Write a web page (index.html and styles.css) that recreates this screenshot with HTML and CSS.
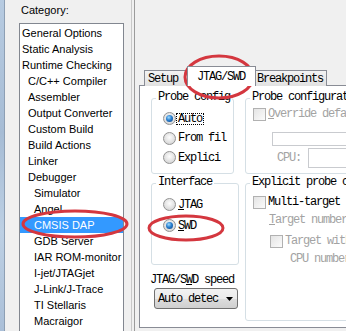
FILE: index.html
```html
<!DOCTYPE html>
<html lang="en">
<head>
    <meta charset="UTF-8">
    <title>Options - Debugger</title>
    <link rel="stylesheet" href="styles.css">
</head>
<body>
    <div class="dialog">
        <div class="edge"></div>

        <div class="category">
            <div class="category-label">Category:</div>
            <ul class="tree">
                <li>General Options</li>
                <li>Static Analysis</li>
                <li>Runtime Checking</li>
                <li class="lv2">C/C++ Compiler</li>
                <li class="lv2">Assembler</li>
                <li class="lv2">Output Converter</li>
                <li class="lv2">Custom Build</li>
                <li class="lv2">Build Actions</li>
                <li class="lv2">Linker</li>
                <li class="lv2">Debugger</li>
                <li class="lv3">Simulator</li>
                <li class="lv3">Angel</li>
                <li class="lv3 selected">CMSIS DAP</li>
                <li class="lv3">GDB Server</li>
                <li class="lv3">IAR ROM-monitor</li>
                <li class="lv3">I-jet/JTAGjet</li>
                <li class="lv3">J-Link/J-Trace</li>
                <li class="lv3">TI Stellaris</li>
                <li class="lv3">Macraigor</li>
            </ul>
        </div>

        <div class="splitter"></div>

        <div class="options">
            <div class="tabs">
                <div class="tab tab-setup">Setup</div>
                <div class="tab tab-active">JTAG/SWD</div>
                <div class="tab tab-bp">Breakpoints</div>
            </div>
            <div class="panel">
                <div class="col-left">
                    <div class="group group-probe">
                        <div class="legend">Probe config</div>
                        <div class="opts probe-opts">
                            <div class="opt"><span class="radio on"></span><span class="lbl focus">Auto</span></div>
                            <div class="opt"><span class="radio"></span><span class="lbl">From fil</span></div>
                            <div class="opt"><span class="radio"></span><span class="lbl">Explici</span></div>
                        </div>
                    </div>
                    <div class="group group-iface">
                        <div class="legend">Interface</div>
                        <div class="opts iface-opts">
                            <div class="opt"><span class="radio"></span><span class="lbl"><u>J</u>TAG</span></div>
                            <div class="opt"><span class="radio on"></span><span class="lbl"><u>S</u>WD</span></div>
                        </div>
                    </div>
                    <div class="speed">JTAG/S<u>W</u>D speed</div>
                    <div class="select">
                        <span>Auto detec</span>
                        <svg width="7" height="4" viewBox="0 0 7 4"><path d="M0 0H7L3.5 4Z" fill="#000"/></svg>
                    </div>
                </div>

                <div class="col-right">
                    <div class="group group-pcfg">
                        <div class="legend">Probe configuration</div>
                        <div class="check-row first-row"><span class="check"></span><span class="dim"><u>O</u>verride default</span></div>
                        <div class="box box-file"></div>
                        <div class="cpu-row"><span class="dim">CPU:</span><span class="box box-cpu"></span></div>
                    </div>
                    <div class="group group-explicit">
                        <div class="legend">Explicit probe configuration</div>
                        <div class="check-row multi-row"><span class="check"></span><span>Multi-target debugging</span></div>
                        <div class="check-row target-row"><span class="dim"><u>T</u>arget number</span></div>
                        <div class="check-row with-row"><span class="check"></span><span class="dim">Target with multiple CPUs</span></div>
                        <div class="check-row cpunum-row"><span class="dim">CPU number</span></div>
                    </div>
                </div>
            </div>
        </div>

        <svg class="marks" width="346" height="331" viewBox="0 0 346 331">
            <ellipse cx="219" cy="77" rx="34" ry="21"/>
            <ellipse cx="75" cy="224" rx="52" ry="13"/>
            <ellipse cx="186" cy="228" rx="37" ry="12"/>
        </svg>
    </div>
</body>
</html>
```

FILE: styles.css
```css
body {
    margin: 0;
    background: #f0f0f0;
    font-family: "Liberation Sans", Arial, sans-serif;
    font-size: 11px;
    color: #000;
}
.dialog {
    position: relative;
    display: flex;
    align-items: flex-start;
    width: 346px;
    height: 331px;
    overflow: hidden;
}
.edge {
    flex: none;
    width: 4px;
    height: 331px;
    background: linear-gradient(#b7cbe1, #a6bcd5 40%, #bdd0e4 70%, #aabfd8);
    border-right: 1px solid #8d9fb4;
}

/* category tree */
.category {
    flex: none;
    width: 125px;
    padding-left: 14px;
    box-sizing: border-box;
}
.category-label {
    margin: 3px 0 0 2px;
    line-height: 14px;
}
.tree {
    list-style: none;
    margin: 6px 0 0;
    padding: 1px 0 0;
    width: 105px;
    height: 320px;
    box-sizing: border-box;
    background: #fff;
    border: 1px solid #828790;
}
.tree li {
    height: 16px;
    line-height: 16px;
    padding-left: 2px;
    white-space: nowrap;
}
.tree .lv2 {
    padding-left: 8px;
}
.tree .lv3 {
    padding-left: 14px;
}
.tree .selected {
    background: #3399ff;
    color: #fff;
}
.splitter {
    flex: none;
    width: 2px;
    height: 331px;
    margin-left: 1px;
    border-left: 1px solid #c8c8c8;
    border-right: 1px solid #9b9b9b;
}

/* options pane */
.options {
    flex: none;
    width: 260px;
    padding: 66px 0 0 4px;
    font-family: "Liberation Mono", monospace;
    font-size: 12px;
    letter-spacing: -1.2px;
}
.tabs {
    display: flex;
    align-items: flex-end;
    height: 20px;
    padding-left: 5px;
}
.tab {
    flex: none;
    box-sizing: border-box;
    height: 16px;
    padding-top: 2px;
    line-height: 12px;
    border: 1px solid #898c95;
    border-bottom: none;
    background: linear-gradient(#f3f3f3, #e1e1e1);
    white-space: nowrap;
}
.tab-setup {
    width: 45px;
    padding-left: 3px;
}
.tab-active {
    position: relative;
    z-index: 1;
    width: 69px;
    height: 20px;
    padding-top: 4px;
    padding-left: 9px;
    margin: 0 -2px;
    background: #fff;
}
.tab-bp {
    width: 73px;
    padding-left: 2px;
}
.panel {
    display: flex;
    align-items: flex-start;
    margin-top: -1px;
    width: 256px;
    height: 243px;
    box-sizing: border-box;
    padding: 12px 0 0 11px;
    border: 1px solid #898c95;
    background: #fff;
}
.col-left {
    flex: none;
    width: 88px;
}
.col-right {
    flex: none;
    width: 160px;
    margin-left: 6px;
}
.group {
    box-sizing: border-box;
    border: 1px solid #d5dfe5;
    border-radius: 3px;
}
.legend {
    width: max-content;
    margin: -8px 0 0 4px;
    padding: 0 2px;
    line-height: 12px;
    background: #fff;
    white-space: nowrap;
}
.group-probe {
    width: 83px;
    height: 76px;
}
.group-iface {
    width: 88px;
    height: 82px;
    margin-top: 9px;
}
.probe-opts {
    padding-top: 6px;
}
.probe-opts .opt {
    height: 19.5px;
}
.iface-opts {
    padding-top: 6px;
}
.iface-opts .opt {
    height: 21px;
}
.opt {
    display: flex;
    align-items: center;
    margin-left: 11px;
}
.radio {
    flex: none;
    display: flex;
    align-items: center;
    justify-content: center;
    width: 13px;
    height: 13px;
    box-sizing: border-box;
    border: 1px solid #929292;
    border-radius: 50%;
    background: radial-gradient(circle at 50% 40%, #fdfdfd 0, #e2e2e2 55%, #c9c9c9 100%);
}
.radio.on::after {
    content: "";
    width: 7px;
    height: 7px;
    border-radius: 50%;
    background: radial-gradient(circle at 40% 35%, #9fdcff 0, #2a7fcf 45%, #0b3f80 100%);
}
.lbl {
    padding: 0 1px;
    line-height: 10px;
    border: 1px solid transparent;
    white-space: nowrap;
}
.lbl.focus {
    border: 1px dotted #000;
}
.speed {
    margin: 9px 0 0 -1px;
    line-height: 12px;
    white-space: nowrap;
}
.select {
    display: flex;
    align-items: center;
    justify-content: space-between;
    width: 84px;
    height: 21px;
    box-sizing: border-box;
    margin: 2px 0 0 3px;
    padding: 0 4px 0 3px;
    border: 1px solid #707070;
    border-radius: 3px;
    background: linear-gradient(#f2f2f2 0, #ebebeb 50%, #dddddd 50%, #cfcfcf 100%);
    white-space: nowrap;
}

/* right column */
.group-pcfg {
    width: 160px;
    height: 76px;
}
.group-explicit {
    width: 160px;
    height: 138px;
    margin-top: 9px;
}
.check-row {
    display: flex;
    align-items: center;
    height: 18px;
    padding-left: 7px;
    white-space: nowrap;
}
.first-row {
    margin-top: 2px;
}
.multi-row {
    margin-top: 5px;
}
.target-row {
    padding-left: 23px;
}
.with-row {
    margin-top: 3px;
    padding-left: 24px;
}
.cpunum-row {
    padding-left: 44px;
}
.check {
    flex: none;
    width: 13px;
    height: 13px;
    box-sizing: border-box;
    margin-right: 2px;
    border: 1px solid #b1b1b1;
    background: linear-gradient(135deg, #e4e4e4, #fbfbfb);
}
.dim {
    color: #a3a3a3;
}
.box {
    box-sizing: border-box;
    border: 1px solid #c9cbcf;
    background: #fff;
}
.box-file {
    height: 14px;
    margin: 9px 0 0 26px;
}
.cpu-row {
    display: flex;
    align-items: center;
    height: 20px;
    margin-top: 2px;
    padding-left: 31px;
}
.box-cpu {
    flex: none;
    width: 80px;
    height: 20px;
    margin-left: 7px;
}

/* red annotation rings */
.marks {
    position: absolute;
    top: 0;
    left: 0;
    pointer-events: none;
}
.marks ellipse {
    fill: none;
    stroke: #d4373f;
    stroke-width: 3;
}
```
